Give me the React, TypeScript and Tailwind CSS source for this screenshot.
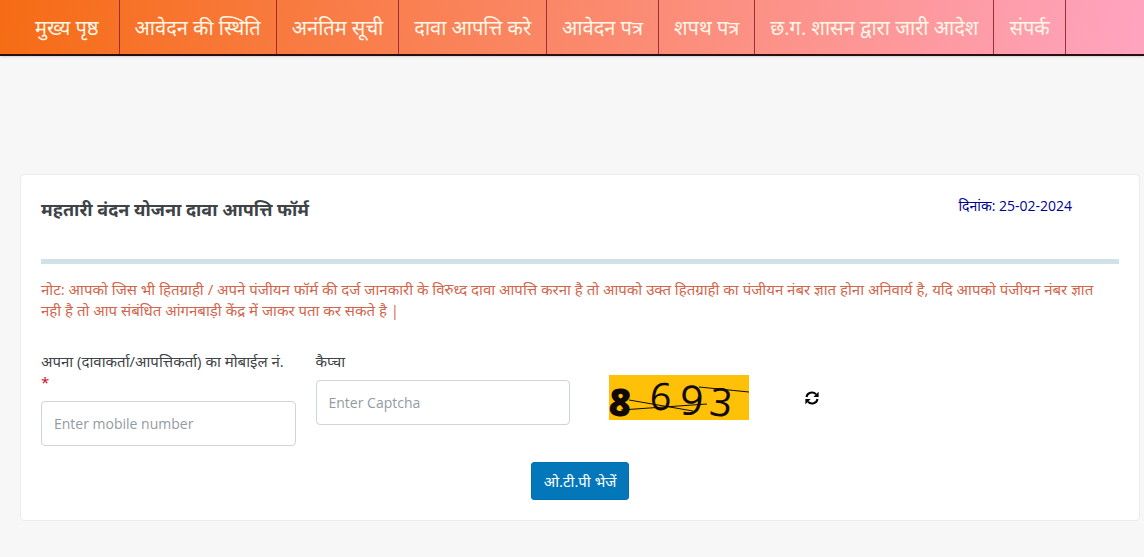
import React, { useState } from "react";

const menuItems = [
  "मुख्य पृष्ठ",
  "आवेदन की स्थिति",
  "अनंतिम सूची",
  "दावा आपत्ति करे",
  "आवेदन पत्र",
  "शपथ पत्र",
  "छ.ग. शासन द्वारा जारी आदेश",
  "संपर्क",
];

const NavBar: React.FC = () => (
  <nav className="border-b-2 border-[#2a0f12] bg-[linear-gradient(100deg,#f66c14,#ffa4c0)] pl-5 shadow-sm">
    <ul className="flex">
      {menuItems.map((item) => (
        <li key={item} className="border-r border-[#a02c38] first:pr-[5px]">
          <a
            href="#"
            className="block px-[15px] pt-4 pb-3.5 text-xl leading-6 whitespace-nowrap text-[#fff6e6]"
          >
            {item}
          </a>
        </li>
      ))}
    </ul>
  </nav>
);

const Captcha: React.FC = () => (
  <svg
    role="img"
    aria-label="Captcha"
    width="140"
    height="45"
    viewBox="0 0 140 45"
    className="shrink-0 overflow-visible bg-[#ffc107]"
  >
    <g fill="#120a00" fontFamily="'Open Sans', 'Noto Sans', sans-serif">
      <text x="0" y="41" fontSize="38" fontWeight="800" transform="rotate(4 11 27)">
        8
      </text>
      <text x="41" y="35" fontSize="38" transform="rotate(4 51 21)">
        6
      </text>
      <text x="71" y="40" fontSize="41" fontWeight="500" transform="rotate(3 83 26)">
        9
      </text>
      <text x="101" y="41" fontSize="39" transform="rotate(6 111 27)">
        3
      </text>
    </g>
    <g stroke="#120a00" strokeWidth="1" fill="none">
      <path d="M20 25 L84 36" />
      <path d="M12 35 L98 29" />
      <path d="M90 12 L140 17" />
    </g>
  </svg>
);

const RefreshIcon: React.FC = () => (
  <svg width="14" height="14" viewBox="0 0 14 14" aria-hidden="true">
    <g fill="none" stroke="#000" strokeWidth="2">
      <path d="M1.5 6 A5.5 5.2 0 0 1 11 3.2" />
      <path d="M12.5 8 A5.5 5.2 0 0 1 3 10.8" />
    </g>
    <path d="M13.6 0.8 V6 H8.4 Z" />
    <path d="M0.4 13.2 V8 H5.6 Z" />
  </svg>
);

const labelClass = "mb-2 block pr-2 text-[15px] leading-[21px]";
const inputClass =
  "h-[45px] w-full rounded border border-[#ced4da] bg-white px-3 text-sm text-[#495057] placeholder:text-[#939ba2]";

const App: React.FC = () => {
  const [mobile, setMobile] = useState("");
  const [captcha, setCaptcha] = useState("");

  return (
    <div className="min-h-screen bg-[#f7f7f7] font-['Open_Sans','Noto_Sans',sans-serif] text-sm text-[#3e4347]">
      <NavBar />

      <main className="pt-[118px] pr-1 pb-9 pl-5">
        <section className="rounded border border-[#ececec] bg-white px-5 py-5">
          {/* Title and date */}
          <div className="flex items-start justify-between pr-[47px]">
            <h1 className="text-lg leading-7 font-bold">
              महतारी वंदन योजना दावा आपत्ति फॉर्म
            </h1>
            <p className="leading-[22px] text-[#000096]">दिनांक: 25-02-2024</p>
          </div>

          <hr className="mt-9 border-t-[5px] border-[#d0e2e6]" />

          <p className="mt-[15px] pr-2 text-[15px] leading-[21px] text-[#d2664c]">
            नोट: आपको जिस भी हितग्राही / अपने पंजीयन फॉर्म की दर्ज जानकारी के
            विरुध्द दावा आपत्ति करना है तो आपको उक्त हितग्राही का पंजीयन नंबर
            ज्ञात होना अनिवार्य है, यदि आपको पंजीयन नंबर ज्ञात नही है तो आप
            संबंधित आंगनबाड़ी केंद्र में जाकर पता कर सकते है |
          </p>

          <form className="mt-[30px]" onSubmit={(e) => e.preventDefault()}>
            <div className="grid grid-cols-4 gap-5">
              <div>
                <label htmlFor="mobile" className={labelClass}>
                  अपना (दावाकर्ता/आपत्तिकर्ता) का मोबाईल नं.{" "}
                  <span className="text-[#d0021b]">*</span>
                </label>
                <input
                  id="mobile"
                  type="text"
                  placeholder="Enter mobile number"
                  className={inputClass}
                  value={mobile}
                  onChange={(e) => setMobile(e.target.value)}
                />
              </div>

              <div>
                <label htmlFor="captcha" className={labelClass}>
                  कैप्चा
                </label>
                <input
                  id="captcha"
                  type="text"
                  placeholder="Enter Captcha"
                  className={inputClass}
                  value={captcha}
                  onChange={(e) => setCaptcha(e.target.value)}
                />
              </div>

              {/* Captcha image and reload */}
              <div className="col-span-2 flex items-start gap-14 pt-6 pl-[19px]">
                <Captcha />
                <button
                  type="button"
                  aria-label="Refresh captcha"
                  className="mt-4"
                >
                  <RefreshIcon />
                </button>
              </div>
            </div>

            <div className="mt-4 flex justify-center">
              <button
                type="submit"
                className="rounded-[3px] border border-[#026fae] bg-[#0477bb] px-3 py-2 text-[15px] leading-5 text-white"
              >
                ओ.टी.पी भेजें
              </button>
            </div>
          </form>
        </section>
      </main>
    </div>
  );
};

export default App;
